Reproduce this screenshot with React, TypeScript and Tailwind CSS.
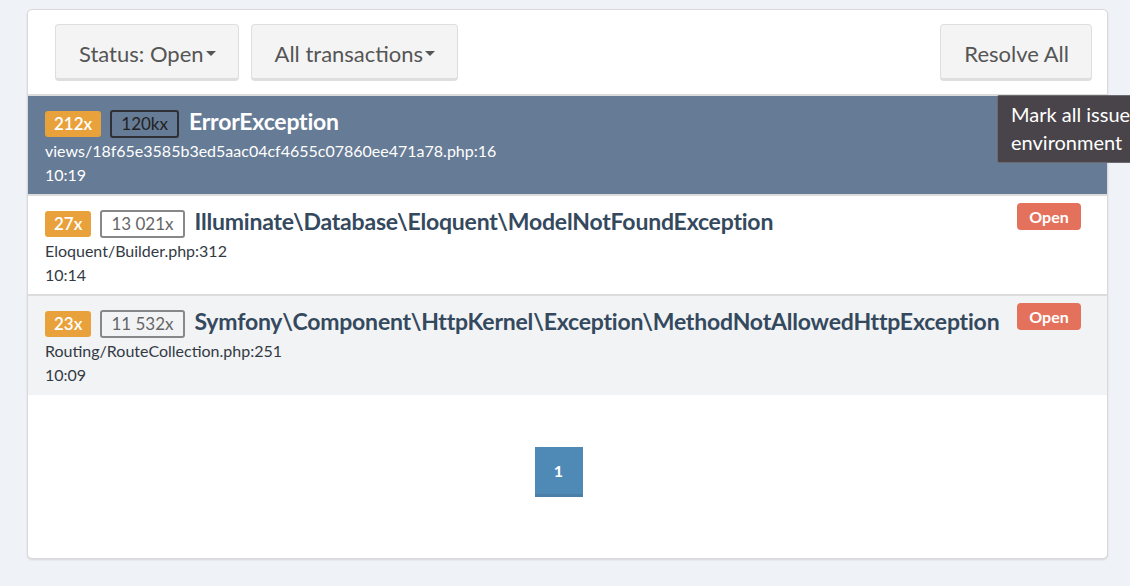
import React from "react";

const font = { fontFamily: "Lato, 'Open Sans', sans-serif" };

function Caret() {
  return (
    <span className="inline-block ml-[2px] align-middle w-0 h-0 border-l-[5px] border-r-[5px] border-t-[5px] border-l-transparent border-r-transparent border-t-[#555]" />
  );
}

type Row = {
  count: string;
  total: string;
  title: string;
  file: string;
  time: string;
  active?: boolean;
  bg: string;
};

const rows: Row[] = [
  {
    count: "212x",
    total: "120kx",
    title: "ErrorException",
    file: "views/18f65e3585b3ed5aac04cf4655c07860ee471a78.php:16",
    time: "10:19",
    active: true,
    bg: "bg-[#667b95]",
  },
  {
    count: "27x",
    total: "13 021x",
    title: "Illuminate\\Database\\Eloquent\\ModelNotFoundException",
    file: "Eloquent/Builder.php:312",
    time: "10:14",
    bg: "bg-white",
  },
  {
    count: "23x",
    total: "11 532x",
    title: "Symfony\\Component\\HttpKernel\\Exception\\MethodNotAllowedHttpException",
    file: "Routing/RouteCollection.php:251",
    time: "10:09",
    bg: "bg-[#f2f3f5]",
  },
];

const btn =
  "h-[57px] pl-[23px] pr-[22px] pt-[3px] bg-[#f4f4f4] border border-[#dedede] border-b-[3px] rounded-[4px] text-[22px] text-[#555] flex items-center";

export default function App() {
  return (
    <div
      className="relative w-[1130px] h-[586px] overflow-hidden bg-[#eff2f7] pl-[27px] pt-[9px]"
      style={font}
    >
      <div className="w-[1081px] h-[550px] bg-white border border-[#d9d9d9] rounded-[5px] shadow-[0_1px_2px_rgba(0,0,0,0.12)] flex flex-col">
        {/* header */}
        <div className="flex items-center pl-[27px] pr-[15px] pt-[14px] pb-[13px] border-b-2 border-[#dcdcdc]">
          <button className={btn}>
            Status: Open<Caret />
          </button>
          <button className={`ml-[12px] ${btn}`}>
            All transactions<Caret />
          </button>
          <button className={`ml-auto ${btn}`}>Resolve All</button>
        </div>

        {/* rows */}
        <div className="flex flex-col">
          {rows.map((r, i) => (
            <div
              key={i}
              className={`${r.bg} ${
                i < rows.length - 1 ? "border-b-2 border-[#dcdcdc] h-[100px]" : "h-[99px]"
              } pl-[17px] pr-[26px] pt-[14px] flex`}
            >
              <div className="flex-1 min-w-0">
                <div className="flex items-center h-[28px]">
                  <span className="h-[26px] px-[9px] rounded-[3px] bg-[#e9a23b] text-white text-[17px] font-semibold flex items-center">
                    {r.count}
                  </span>
                  <span
                    className={`ml-[9px] h-[28px] px-[9px] rounded-[3px] border-2 text-[17px] flex items-center ${
                      r.active ? "border-[#2d3035] text-[#222]" : "border-[#888] text-[#666]"
                    }`}
                  >
                    {r.total}
                  </span>
                  <span
                    className={`ml-[10px] -mt-[5px] text-[23px] font-bold tracking-[-0.2px] whitespace-nowrap ${
                      r.active ? "text-white" : "text-[#34495e]"
                    }`}
                  >
                    {r.title}
                  </span>
                </div>
                <div className={`mt-[1px] text-[16px] leading-[23px] ${r.active ? "text-white" : "text-[#333a44]"}`}>
                  {r.file}
                </div>
                <div className={`mt-[1px] text-[16px] leading-[23px] ${r.active ? "text-white" : "text-[#333a44]"}`}>
                  {r.time}
                </div>
              </div>
              {!r.active && (
                <div>
                  <span className="-mt-[7px] h-[27px] w-[64px] rounded-[4px] bg-[#e4715c] text-white text-[16px] font-bold flex items-center justify-center">
                    Open
                  </span>
                </div>
              )}
            </div>
          ))}
        </div>

        {/* pagination */}
        <div className="flex justify-center mt-[52px] pr-[18px]">
          <div className="w-[48px] h-[50px] bg-[#4f8ab7] border-b-[3px] border-[#4a7fa8] flex items-center justify-center text-white text-[16px] font-bold">
            1
          </div>
        </div>
      </div>

      {/* tooltip */}
      <div className="absolute left-[997px] top-[95px] w-[200px] h-[68px] bg-[#48444a] border border-[#6d6a70] rounded-[2px] pl-[13px] pt-[4px] text-white text-[20px] leading-[28px]">
        <div className="whitespace-nowrap">Mark all issues in</div>
        <div className="whitespace-nowrap">environment</div>
      </div>
    </div>
  );
}
